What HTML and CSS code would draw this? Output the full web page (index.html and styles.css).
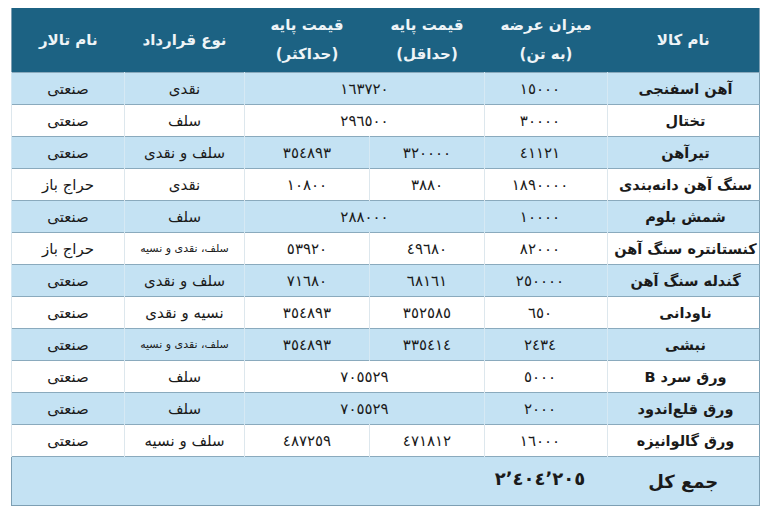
FILE: index.html
```html
<!DOCTYPE html>
<html lang="fa" dir="rtl">
<head>
<meta charset="utf-8">
<link rel="stylesheet" href="styles.css">
</head>
<body>
<table class="grid">
  <colgroup>
    <col class="c-name"><col class="c-qty"><col class="c-min"><col class="c-max"><col class="c-type"><col class="c-hall">
  </colgroup>
  <thead>
    <tr>
      <th>نام کالا</th>
      <th>میزان عرضه<br>(به تن)</th>
      <th>قیمت پایه<br>(حداقل)</th>
      <th>قیمت پایه<br>(حداکثر)</th>
      <th>نوع قرارداد</th>
      <th>نام تالار</th>
    </tr>
  </thead>
  <tbody>
    <tr class="alt"><td class="nm">آهن اسفنجی</td><td class="qty">١٥٠٠٠</td><td colspan="2">١٦٣٧٢٠</td><td>نقدی</td><td>صنعتی</td></tr>
    <tr><td class="nm">تختال</td><td class="qty">٣٠٠٠٠</td><td colspan="2">٢٩٦٥٠٠</td><td>سلف</td><td>صنعتی</td></tr>
    <tr class="alt"><td class="nm">تیرآهن</td><td class="qty">٤١١٢١</td><td>٣٢٠٠٠٠</td><td>٣٥٤٨٩٣</td><td>سلف و نقدی</td><td>صنعتی</td></tr>
    <tr><td class="nm">سنگ آهن دانه‌بندی</td><td class="qty">١٨٩٠٠٠٠</td><td>٣٨٨٠</td><td>١٠٨٠٠</td><td>نقدی</td><td>حراج باز</td></tr>
    <tr class="alt"><td class="nm">شمش بلوم</td><td class="qty">١٠٠٠٠</td><td colspan="2">٢٨٨٠٠٠</td><td>سلف</td><td>صنعتی</td></tr>
    <tr><td class="nm">کنستانتره سنگ آهن</td><td class="qty">٨٢٠٠٠</td><td>٤٩٦٨٠</td><td>٥٣٩٢٠</td><td class="sm">سلف، نقدی و نسیه</td><td>حراج باز</td></tr>
    <tr class="alt"><td class="nm">گندله سنگ آهن</td><td class="qty">٢٥٠٠٠٠</td><td>٦٨١٦١</td><td>٧١٦٨٠</td><td>سلف و نقدی</td><td>صنعتی</td></tr>
    <tr><td class="nm">ناودانی</td><td class="qty">٦٥٠</td><td>٣٥٢٥٨٥</td><td>٣٥٤٨٩٣</td><td>نسیه و نقدی</td><td>صنعتی</td></tr>
    <tr class="alt"><td class="nm">نبشی</td><td class="qty">٢٤٣٤</td><td>٣٣٥٤١٤</td><td>٣٥٤٨٩٣</td><td class="sm">سلف، نقدی و نسیه</td><td>صنعتی</td></tr>
    <tr><td class="nm">ورق سرد B</td><td class="qty">٥٠٠٠</td><td colspan="2">٧٠٥٥٢٩</td><td>سلف</td><td>صنعتی</td></tr>
    <tr class="alt"><td class="nm">ورق قلع‌اندود</td><td class="qty">٢٠٠٠</td><td colspan="2">٧٠٥٥٢٩</td><td>سلف</td><td>صنعتی</td></tr>
    <tr><td class="nm">ورق گالوانیزه</td><td class="qty">١٦٠٠٠</td><td>٤٧١٨١٢</td><td>٤٨٧٢٥٩</td><td>سلف و نسیه</td><td>صنعتی</td></tr>
  </tbody>
  <tfoot>
    <tr class="total"><td class="tl">جمع کل</td><td class="tv">٢٬٤٠٤٬٢٠٥</td><td colspan="4"></td></tr>
  </tfoot>
</table>
</body>
</html>
```
FILE: styles.css
```css
html, body {
  margin: 0;
  background: #ffffff;
}
body {
  padding: 8px 15px 0 12px;
  font-family: "DejaVu Sans", "Liberation Sans", sans-serif;
  color: #1a1a1a;
}
.grid {
  width: 748px;
  border-collapse: collapse;
  table-layout: fixed;
  border-left: 1px solid #7d9fb3;
  border-right: 1px solid #7d9fb3;
  border-bottom: 1px solid #7d9fb3;
}
.c-name { width: 152px; }
.c-qty { width: 123px; }
.c-min { width: 115px; }
.c-max { width: 125px; }
.c-type { width: 120px; }
.c-hall { width: 113px; }

.grid th {
  background: #1c6283;
  color: #eef4f7;
  font-weight: bold;
  font-size: 15px;
  line-height: 29px;
  height: 64px;
  padding: 0;
  text-align: center;
  vertical-align: middle;
}
.grid td {
  height: 31px;
  padding: 0;
  text-align: center;
  vertical-align: middle;
  font-size: 15px;
  border-top: 1px solid #8aaabd;
  border-left: 1px solid #dde7ed;
  white-space: nowrap;
}
.grid tbody tr.alt td { background: #c4e2f3; border-left-color: #d6e9f4; }
.grid td.nm {
  font-weight: bold;
  font-size: 14.5px;
  padding-left: 4px;
}
.grid td.qty { padding-right: 12px; }
.grid td.sm { font-size: 11px; }
.grid tr.total td {
  background: #c4e2f3;
  height: 42px;
  border-left: none;
}
.grid td.tl {
  font-weight: bold;
  font-size: 18px;
}
.grid td.tv {
  font-weight: bold;
  font-size: 18px;
  padding-right: 12px;
  padding-bottom: 6px;
}
```
